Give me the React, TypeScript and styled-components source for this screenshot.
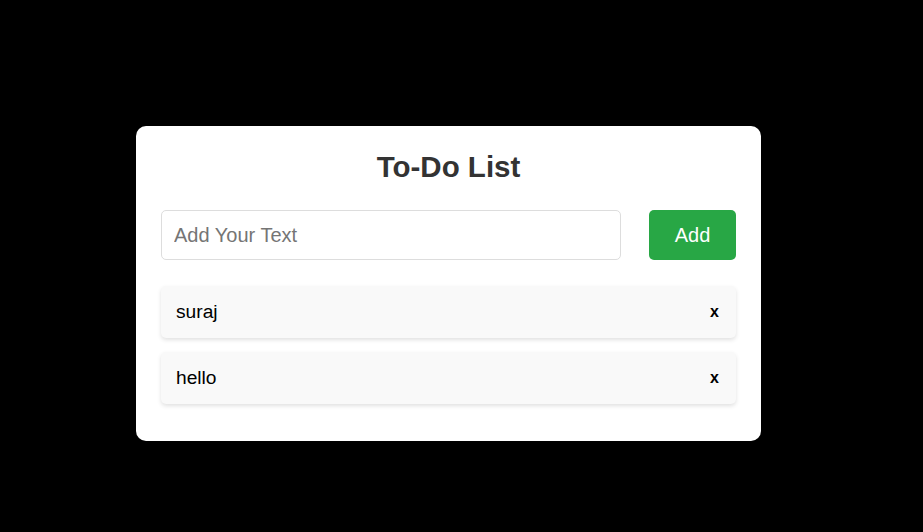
import React, { useState } from "react";
import styled, { createGlobalStyle } from "styled-components";

const Global = createGlobalStyle`
  html, body { margin: 0; padding: 0; background: #000; }
  body { font-family: "Liberation Sans", Arial, sans-serif; }
  * { box-sizing: border-box; }
`;

const Page = styled.div`
  width: 923px;
  height: 532px;
  background: #000;
  display: flex;
  justify-content: center;
  padding-top: 126px;
  padding-right: 26px;
`;

const Card = styled.div`
  width: 625px;
  height: 315px;
  background: #fff;
  border-radius: 10px;
  padding: 25px 25px 25px;
  display: flex;
  flex-direction: column;
`;

const Title = styled.h2`
  margin: 0;
  text-align: center;
  font-size: 29.5px;
  font-weight: bold;
  color: #333;
  line-height: 32px;
`;

const InputRow = styled.div`
  display: flex;
  gap: 28px;
  margin-top: 27px;
`;

const TextInput = styled.input`
  flex: 1;
  height: 50px;
  border: 1px solid #ddd;
  border-radius: 5px;
  padding: 0 12px;
  font-family: "Liberation Sans", Arial, sans-serif;
  font-size: 20px;
  color: #333;
  outline: none;
  &::placeholder { color: #757575; }
`;

const AddButton = styled.button`
  width: 87px;
  height: 50px;
  border: none;
  border-radius: 5px;
  background: #28a745;
  color: #fff;
  font-family: "Liberation Sans", Arial, sans-serif;
  font-size: 20px;
  cursor: pointer;
`;

const List = styled.ul`
  list-style: none;
  margin: 26px 0 0;
  padding: 0;
  display: flex;
  flex-direction: column;
  gap: 14px;
`;

const Item = styled.li`
  height: 52px;
  background: #f9f9f9;
  border-radius: 5px;
  box-shadow: 0 2px 4px rgba(0, 0, 0, 0.12);
  display: flex;
  align-items: center;
  justify-content: space-between;
  padding: 0 15px;
  font-size: 19.2px;
  color: #000;
`;

const Remove = styled.button`
  border: none;
  background: transparent;
  font-family: "Liberation Sans", Arial, sans-serif;
  font-size: 16px;
  font-weight: bold;
  color: #000;
  padding: 0 2px;
  cursor: pointer;
  line-height: 1;
`;

export default function App() {
  const [items, setItems] = useState<string[]>(["suraj", "hello"]);
  const [text, setText] = useState("");
  return (
    <>
      <Global />
      <Page>
        <Card>
          <Title>To-Do List</Title>
          <InputRow>
            <TextInput
              placeholder="Add Your Text"
              value={text}
              onChange={(e) => setText(e.target.value)}
            />
            <AddButton
              onClick={() => {
                if (text.trim()) {
                  setItems([...items, text.trim()]);
                  setText("");
                }
              }}
            >
              Add
            </AddButton>
          </InputRow>
          <List>
            {items.map((it, i) => (
              <Item key={i}>
                <span>{it}</span>
                <Remove onClick={() => setItems(items.filter((_, j) => j !== i))}>x</Remove>
              </Item>
            ))}
          </List>
        </Card>
      </Page>
    </>
  );
}
